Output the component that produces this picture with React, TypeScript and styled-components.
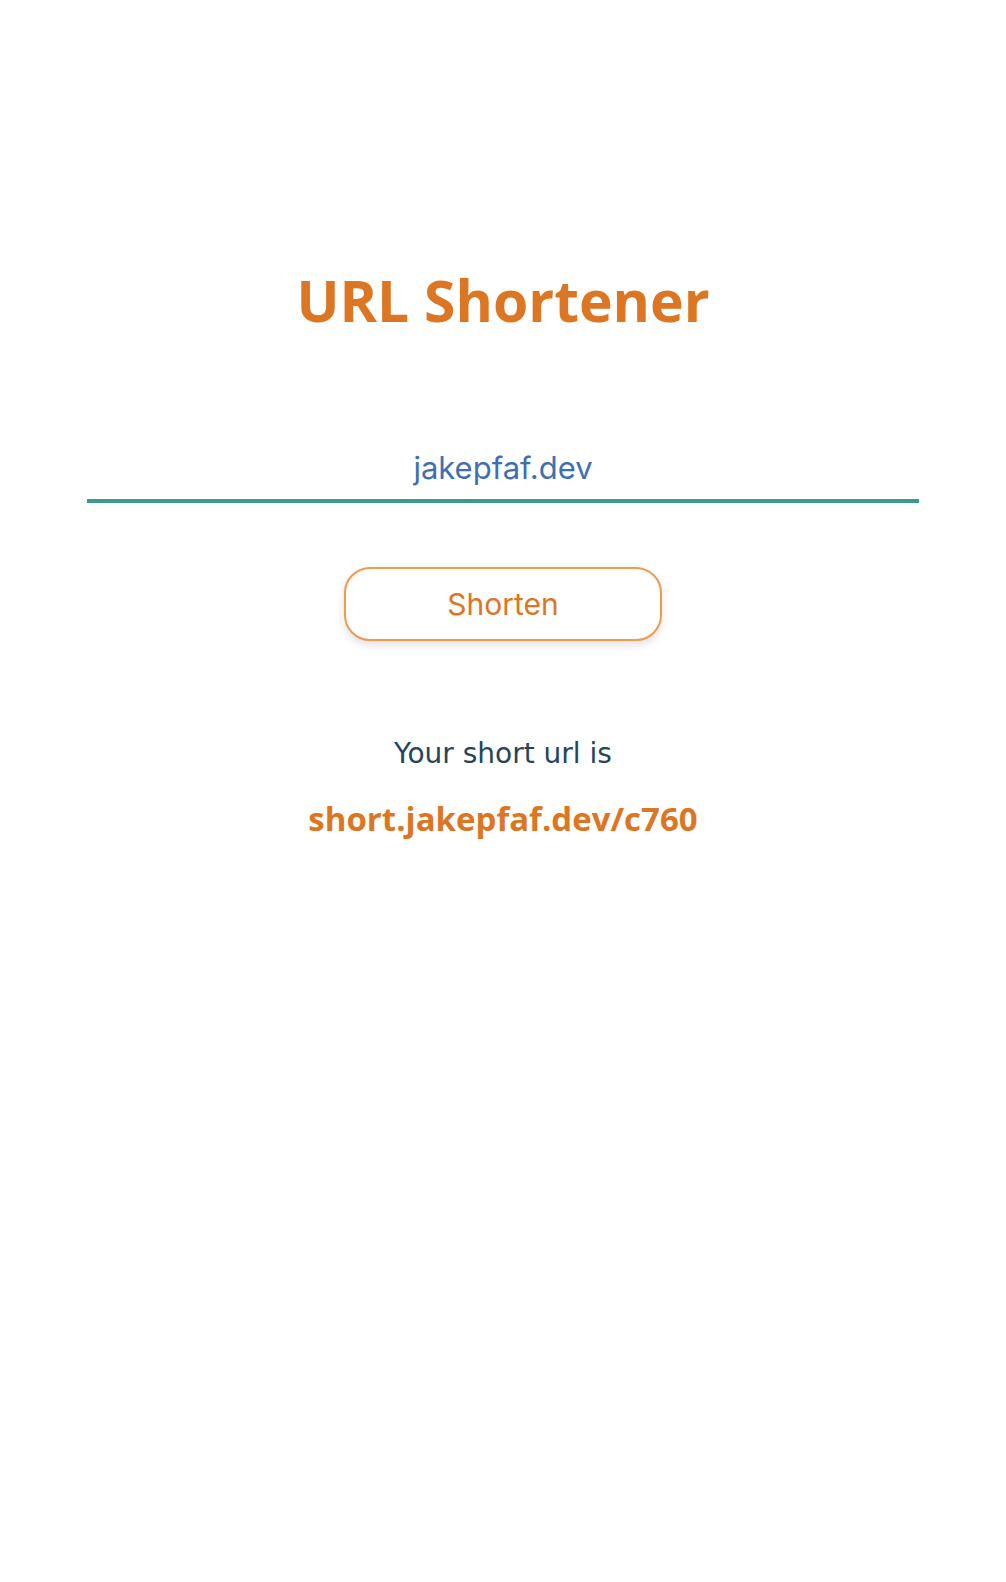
import React, { useState } from "react";
import styled, { createGlobalStyle } from "styled-components";

const GlobalStyle = createGlobalStyle`
  html, body {
    margin: 0;
    padding: 0;
    background: #ffffff;
  }
  body {
    font-family: "DejaVu Sans", "Open Sans", sans-serif;
  }
`;

const Page = styled.main`
  min-height: 1582px;
  display: flex;
  flex-direction: column;
  align-items: center;
  padding-top: 262px;
  box-sizing: border-box;
`;

const Title = styled.h1`
  margin: 0;
  font-family: "Open Sans", "DejaVu Sans", sans-serif;
  font-weight: 700;
  font-size: 57px;
  line-height: 76px;
  color: #dc7622;
  letter-spacing: 0;
`;

const Form = styled.form`
  width: 832px;
  display: flex;
  flex-direction: column;
  align-items: center;
  margin-top: 104px;
`;

const UrlInput = styled.input`
  width: 100%;
  box-sizing: border-box;
  border: none;
  border-bottom: 4px solid #3a9b8d;
  outline: none;
  background: transparent;
  text-align: center;
  font-family: "Inter", "Roboto", sans-serif;
  font-size: 31px;
  color: #3f6fb3;
  padding: 7px 0 13px;
`;

const Button = styled.button`
  margin-top: 64px;
  width: 318px;
  height: 74px;
  border: 2px solid #f09a50;
  border-radius: 26px;
  background: #ffffff;
  color: #dc7622;
  font-family: "Inter", "Roboto", sans-serif;
  font-size: 30px;
  box-shadow: 0 4px 8px rgba(0, 0, 0, 0.12);
  cursor: pointer;
`;

const Result = styled.section`
  margin-top: 96px;
  display: flex;
  flex-direction: column;
  align-items: center;
  gap: 26px;
`;

const Label = styled.p`
  margin: 0;
  font-family: "DejaVu Sans", sans-serif;
  font-size: 28px;
  color: #254558;
`;

const ShortLink = styled.a`
  font-family: "Open Sans", "DejaVu Sans", sans-serif;
  font-weight: 700;
  font-size: 33px;
  color: #dc7622;
  text-decoration: none;
`;

export default function App() {
  const [url, setUrl] = useState("jakepfaf.dev");
  return (
    <>
      <GlobalStyle />
      <Page>
        <Title>URL Shortener</Title>
        <Form onSubmit={(e) => e.preventDefault()}>
          <UrlInput value={url} onChange={(e) => setUrl(e.target.value)} />
          <Button type="submit">Shorten</Button>
        </Form>
        <Result>
          <Label>Your short url is</Label>
          <ShortLink href="#">short.jakepfaf.dev/c760</ShortLink>
        </Result>
      </Page>
    </>
  );
}
